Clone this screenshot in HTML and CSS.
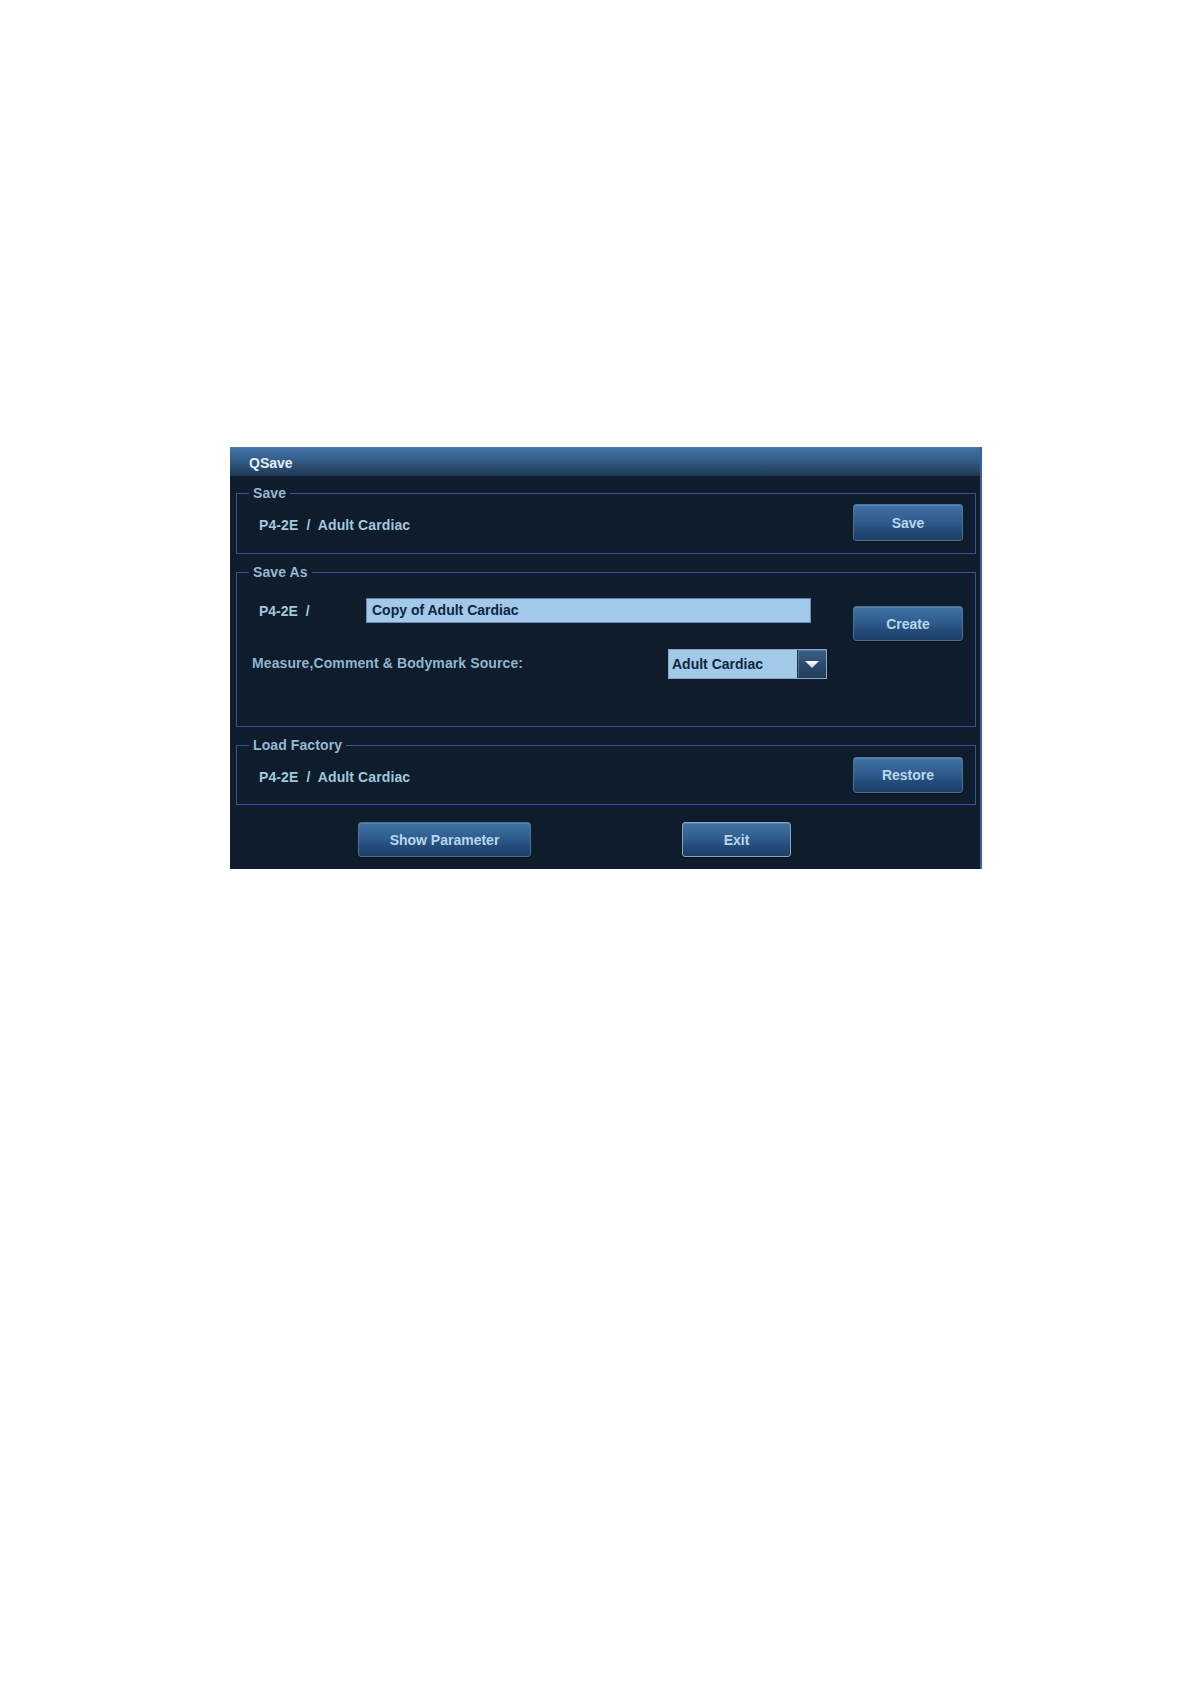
FILE: index.html
```html
<!DOCTYPE html>
<html lang="en">
<head>
<meta charset="utf-8">
<title>QSave</title>
<link rel="stylesheet" href="styles.css">
</head>
<body>
<div class="page">
  <div class="dialog">
    <div class="titlebar">QSave</div>
    <div class="content">
      <fieldset class="group g-save">
        <legend>Save</legend>
        <div class="row">
          <span class="path">P4-2E  /  Adult Cardiac</span>
          <button class="btn btn-side">Save</button>
        </div>
      </fieldset>

      <fieldset class="group g-saveas">
        <legend>Save As</legend>
        <div class="saveas-body">
          <div class="saveas-left">
            <div class="row-name">
              <span class="name-label">P4-2E  /</span>
              <div class="text-input">Copy of Adult Cardiac</div>
            </div>
            <div class="row-src">
              <span class="src-label">Measure,Comment &amp; Bodymark Source:</span>
              <div class="select">
                <span class="select-value">Adult Cardiac</span>
                <span class="select-arrow">
                  <svg width="14" height="7" viewBox="0 0 14 7"><defs><linearGradient id="tg" x1="0" y1="0" x2="0" y2="1"><stop offset="0" stop-color="#ffffff"/><stop offset="1" stop-color="#b9d3ea"/></linearGradient></defs><polygon points="0,0 14,0 7,7" fill="url(#tg)"/></svg>
                </span>
              </div>
            </div>
          </div>
          <button class="btn btn-side btn-create">Create</button>
        </div>
      </fieldset>

      <fieldset class="group g-load">
        <legend>Load Factory</legend>
        <div class="row">
          <span class="path">P4-2E  /  Adult Cardiac</span>
          <button class="btn btn-side btn-restore">Restore</button>
        </div>
      </fieldset>

      <div class="footer">
        <button class="btn btn-show">Show Parameter</button>
        <button class="btn btn-exit">Exit</button>
      </div>
    </div>
  </div>
</div>
</body>
</html>
```

FILE: styles.css
```css
html, body {
  margin: 0;
  padding: 0;
  background: #ffffff;
}

body {
  font-family: "Liberation Sans", Arial, sans-serif;
  font-size: 14px;
  font-weight: bold;
}

.page {
  padding: 447px 0 0 230px;
}

.dialog {
  width: 750px;
  background: #0e1c2b;
  border-right: 2px solid #3660a0;
}

.titlebar {
  height: 29px;
  box-sizing: border-box;
  border-top: 1px solid #4b7db3;
  padding: 2px 0 0 19px;
  line-height: 26px;
  color: #e6eef6;
  background: linear-gradient(#4072a6 0%, #35638f 35%, #274869 75%, #1f3856 100%);
}

.content {
  padding: 9px 4px 12px 6px;
}

.group {
  margin: 0;
  padding: 0;
  min-width: 0;
  border: 1px solid #33539a;
}

.group legend {
  margin-left: 12px;
  padding: 0 4px;
  line-height: 16px;
  color: #94b9d2;
  letter-spacing: 0.1px;
}

.g-saveas,
.g-load {
  margin-top: 10px;
}

.row {
  display: flex;
  align-items: center;
  justify-content: space-between;
  padding: 3px 12px 12px 22px;
}

.g-load .row {
  padding: 4px 12px 11px 22px;
}

.path {
  white-space: pre;
  color: #9fc8dc;
  margin-top: 5px;
  letter-spacing: 0.1px;
}

.g-load .path {
  margin-top: 4px;
}

.btn {
  font-family: "Liberation Sans", Arial, sans-serif;
  font-size: 14px;
  font-weight: bold;
  color: #b6d7ec;
  background: linear-gradient(#4072a4 0%, #2f5d8e 45%, #244c79 70%, #1c3e66 100%);
  border: 1px solid #4f729b;
  border-radius: 3px;
  box-shadow: inset 0 1px 0 rgba(160, 200, 235, 0.25), 0 1px 1px rgba(0, 0, 0, 0.5);
  padding: 0;
  margin: 0;
  cursor: default;
}

.btn-side {
  width: 110px;
  height: 37px;
}

.btn-restore {
  height: 36px;
}

.saveas-body {
  display: flex;
  justify-content: space-between;
  align-items: flex-start;
  padding: 0 12px 47px 15px;
}

.btn-create {
  margin-top: 26px;
  height: 35px;
}

.row-name {
  display: flex;
  align-items: center;
  margin-top: 18px;
  height: 25px;
}

.name-label {
  width: 114px;
  box-sizing: border-box;
  padding-left: 7px;
  white-space: pre;
  color: #9fc8dc;
}

.text-input {
  width: 445px;
  height: 25px;
  box-sizing: border-box;
  padding-left: 5px;
  line-height: 23px;
  background: #a2c9e9;
  border: 1px solid #6c8db0;
  border-top-color: #5b7ea3;
  color: #0f2640;
}

.row-src {
  display: flex;
  align-items: center;
  margin-top: 26px;
  height: 30px;
}

.src-label {
  width: 416px;
  color: #8fb6cf;
  margin-top: -3px;
  letter-spacing: 0.1px;
}

.select {
  display: flex;
  width: 159px;
  height: 30px;
  box-sizing: border-box;
  border: 1px solid #8ba7c2;
  background: #a2c9e9;
}

.select-value {
  flex: 1;
  padding-left: 3px;
  line-height: 28px;
  color: #0f2640;
}

.select-arrow {
  width: 28px;
  display: flex;
  align-items: center;
  justify-content: center;
  background: linear-gradient(#3b5f86, #2a4868 60%, #213c59);
  border-left: 1px solid #1c3350;
  box-shadow: inset 1px 1px 0 rgba(140, 180, 215, 0.35);
}

.footer {
  display: flex;
  gap: 151px;
  margin-top: 17px;
  padding-left: 122px;
}

.btn-show {
  width: 173px;
  height: 35px;
}

.btn-exit {
  width: 109px;
  height: 35px;
  border-color: #8aa4c2;
}
```
